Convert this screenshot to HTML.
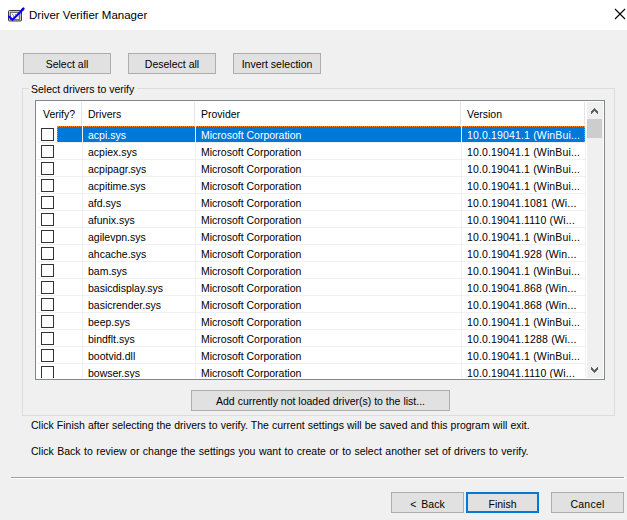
<!DOCTYPE html>
<html><head><meta charset="utf-8"><style>
*{margin:0;padding:0;box-sizing:border-box}
html,body{width:627px;height:520px;overflow:hidden;background:#f0f0f0}
body{position:relative;font-family:"Liberation Sans",sans-serif;font-size:10.5px;color:#000}
.a{position:absolute}
.t{position:absolute;white-space:pre;line-height:17px;height:17px}
.btn{position:absolute;background:#e1e1e1;border:1px solid #adadad;text-align:center;line-height:19px;padding-top:1px;white-space:pre}
.hl{position:absolute;background:#e5e5e5;width:1px}
.gv{position:absolute;background:#f0f0f0;width:1px}
.gh{position:absolute;background:#f0f0f0;height:1px}
.cb{position:absolute;width:13px;height:13px;border:1px solid #333;background:#fff}
</style></head><body>
<div class="a" style="left:0;top:0;width:627px;height:30px;background:#fff"></div>
<svg class="a" style="left:0;top:0" width="30" height="30" viewBox="0 0 30 30">
<rect x="8.5" y="10.5" width="13" height="10.5" rx="1" fill="#c4c4c4" stroke="#3c3c3c" stroke-width="1"/>
<rect x="10.5" y="12.5" width="9" height="7" fill="#f4f4f4" stroke="#707070" stroke-width="1"/>
<rect x="12" y="14" width="1" height="1" fill="#6a8cff"/><rect x="15" y="14" width="1" height="1" fill="#6a8cff"/>
<rect x="13" y="15" width="1" height="2" fill="#ff7070"/><rect x="18.5" y="16.5" width="1" height="1" fill="#e04050"/>
<path d="M9 16.6 L12.5 19.8 L23.2 9.2" fill="none" stroke="#0000ff" stroke-width="2.1" stroke-linecap="round" stroke-linejoin="round"/>
<path d="M22 9.8 L23.4 8.6" fill="none" stroke="#0000ff" stroke-width="2.4" stroke-linecap="round"/>
</svg>
<div class="t" style="left:29px;top:7px;font-size:11.5px;line-height:17px">Driver Verifier Manager</div>
<svg class="a" style="left:614px;top:8px" width="12" height="12" viewBox="0 0 12 12"><path d="M1 1 L11 11 M11 1 L1 11" stroke="#000" stroke-width="1.1"/></svg>
<div class="btn" style="left:23px;top:53px;width:88px;height:21px">Select all</div>
<div class="btn" style="left:128px;top:53px;width:88px;height:21px">Deselect all</div>
<div class="btn" style="left:233px;top:53px;width:88px;height:21px">Invert selection</div>
<div class="a" style="left:22px;top:88px;width:593px;height:328px;border:1px solid #dcdcdc"></div>
<div class="t" style="left:29px;top:81px;padding:0 3px 0 2px;background:#f0f0f0;height:14px">Select drivers to verify</div>
<div class="a" style="left:35px;top:100px;width:570px;height:280px;border:1px solid #828790;background:#fff"></div>
<div class="hl" style="left:81px;top:102px;height:23px"></div>
<div class="hl" style="left:194px;top:102px;height:23px"></div>
<div class="hl" style="left:460px;top:102px;height:23px"></div>
<div class="hl" style="left:584px;top:102px;height:23px"></div>
<div class="t" style="left:43px;top:106px">Verify?</div>
<div class="t" style="left:88px;top:106px">Drivers</div>
<div class="t" style="left:201px;top:106px">Provider</div>
<div class="t" style="left:467px;top:106px">Version</div>
<div class="a" style="left:37px;top:126px;width:549px;height:252px;overflow:hidden">
<div class="a" style="left:20px;top:0px;width:528px;height:16px;background:#0078d7"></div>
<div class="a" style="left:20px;top:0px;width:528px;height:16px;border:1px dotted #ff8728;border-bottom:none"></div>
<div class="gh" style="left:0;top:16px;width:549px"></div>
<div class="cb" style="left:4px;top:2px"></div>
<div class="t" style="left:51px;top:1px;color:#fff">acpi.sys</div>
<div class="t" style="left:164px;top:1px;color:#fff">Microsoft Corporation</div>
<div class="t" style="left:430px;top:1px;color:#fff;letter-spacing:0.15px">10.0.19041.1 (WinBui...</div>
<div class="gh" style="left:0;top:33px;width:549px"></div>
<div class="cb" style="left:4px;top:19px"></div>
<div class="t" style="left:51px;top:18px;color:#000">acpiex.sys</div>
<div class="t" style="left:164px;top:18px;color:#000">Microsoft Corporation</div>
<div class="t" style="left:430px;top:18px;color:#000;letter-spacing:0.15px">10.0.19041.1 (WinBui...</div>
<div class="gh" style="left:0;top:50px;width:549px"></div>
<div class="cb" style="left:4px;top:36px"></div>
<div class="t" style="left:51px;top:35px;color:#000">acpipagr.sys</div>
<div class="t" style="left:164px;top:35px;color:#000">Microsoft Corporation</div>
<div class="t" style="left:430px;top:35px;color:#000;letter-spacing:0.15px">10.0.19041.1 (WinBui...</div>
<div class="gh" style="left:0;top:67px;width:549px"></div>
<div class="cb" style="left:4px;top:53px"></div>
<div class="t" style="left:51px;top:52px;color:#000">acpitime.sys</div>
<div class="t" style="left:164px;top:52px;color:#000">Microsoft Corporation</div>
<div class="t" style="left:430px;top:52px;color:#000;letter-spacing:0.15px">10.0.19041.1 (WinBui...</div>
<div class="gh" style="left:0;top:84px;width:549px"></div>
<div class="cb" style="left:4px;top:70px"></div>
<div class="t" style="left:51px;top:69px;color:#000">afd.sys</div>
<div class="t" style="left:164px;top:69px;color:#000">Microsoft Corporation</div>
<div class="t" style="left:430px;top:69px;color:#000;letter-spacing:0.15px">10.0.19041.1081 (Wi...</div>
<div class="gh" style="left:0;top:101px;width:549px"></div>
<div class="cb" style="left:4px;top:87px"></div>
<div class="t" style="left:51px;top:86px;color:#000">afunix.sys</div>
<div class="t" style="left:164px;top:86px;color:#000">Microsoft Corporation</div>
<div class="t" style="left:430px;top:86px;color:#000;letter-spacing:0.15px">10.0.19041.1110 (Wi...</div>
<div class="gh" style="left:0;top:118px;width:549px"></div>
<div class="cb" style="left:4px;top:104px"></div>
<div class="t" style="left:51px;top:103px;color:#000">agilevpn.sys</div>
<div class="t" style="left:164px;top:103px;color:#000">Microsoft Corporation</div>
<div class="t" style="left:430px;top:103px;color:#000;letter-spacing:0.15px">10.0.19041.1 (WinBui...</div>
<div class="gh" style="left:0;top:135px;width:549px"></div>
<div class="cb" style="left:4px;top:121px"></div>
<div class="t" style="left:51px;top:120px;color:#000">ahcache.sys</div>
<div class="t" style="left:164px;top:120px;color:#000">Microsoft Corporation</div>
<div class="t" style="left:430px;top:120px;color:#000;letter-spacing:0.15px">10.0.19041.928 (Win...</div>
<div class="gh" style="left:0;top:152px;width:549px"></div>
<div class="cb" style="left:4px;top:138px"></div>
<div class="t" style="left:51px;top:137px;color:#000">bam.sys</div>
<div class="t" style="left:164px;top:137px;color:#000">Microsoft Corporation</div>
<div class="t" style="left:430px;top:137px;color:#000;letter-spacing:0.15px">10.0.19041.1 (WinBui...</div>
<div class="gh" style="left:0;top:169px;width:549px"></div>
<div class="cb" style="left:4px;top:155px"></div>
<div class="t" style="left:51px;top:154px;color:#000">basicdisplay.sys</div>
<div class="t" style="left:164px;top:154px;color:#000">Microsoft Corporation</div>
<div class="t" style="left:430px;top:154px;color:#000;letter-spacing:0.15px">10.0.19041.868 (Win...</div>
<div class="gh" style="left:0;top:186px;width:549px"></div>
<div class="cb" style="left:4px;top:172px"></div>
<div class="t" style="left:51px;top:171px;color:#000">basicrender.sys</div>
<div class="t" style="left:164px;top:171px;color:#000">Microsoft Corporation</div>
<div class="t" style="left:430px;top:171px;color:#000;letter-spacing:0.15px">10.0.19041.868 (Win...</div>
<div class="gh" style="left:0;top:203px;width:549px"></div>
<div class="cb" style="left:4px;top:189px"></div>
<div class="t" style="left:51px;top:188px;color:#000">beep.sys</div>
<div class="t" style="left:164px;top:188px;color:#000">Microsoft Corporation</div>
<div class="t" style="left:430px;top:188px;color:#000;letter-spacing:0.15px">10.0.19041.1 (WinBui...</div>
<div class="gh" style="left:0;top:220px;width:549px"></div>
<div class="cb" style="left:4px;top:206px"></div>
<div class="t" style="left:51px;top:205px;color:#000">bindflt.sys</div>
<div class="t" style="left:164px;top:205px;color:#000">Microsoft Corporation</div>
<div class="t" style="left:430px;top:205px;color:#000;letter-spacing:0.15px">10.0.19041.1288 (Wi...</div>
<div class="gh" style="left:0;top:237px;width:549px"></div>
<div class="cb" style="left:4px;top:223px"></div>
<div class="t" style="left:51px;top:222px;color:#000">bootvid.dll</div>
<div class="t" style="left:164px;top:222px;color:#000">Microsoft Corporation</div>
<div class="t" style="left:430px;top:222px;color:#000;letter-spacing:0.15px">10.0.19041.1 (WinBui...</div>
<div class="gh" style="left:0;top:254px;width:549px"></div>
<div class="cb" style="left:4px;top:240px"></div>
<div class="t" style="left:51px;top:239px;color:#000">bowser.sys</div>
<div class="t" style="left:164px;top:239px;color:#000">Microsoft Corporation</div>
<div class="t" style="left:430px;top:239px;color:#000;letter-spacing:0.15px">10.0.19041.1110 (Wi...</div>
<div class="gv" style="left:45px;top:0;height:252px"></div>
<div class="gv" style="left:158px;top:0;height:252px"></div>
<div class="gv" style="left:424px;top:0;height:252px"></div>
<div class="gv" style="left:548px;top:0;height:252px"></div>
</div>
<div class="a" style="left:587px;top:102px;width:16px;height:276px;background:#f0f0f0"></div>
<div class="a" style="left:587px;top:119px;width:15px;height:19px;background:#cdcdcd"></div>
<svg class="a" style="left:0;top:0" width="627" height="520" viewBox="0 0 627 520" shape-rendering="crispEdges"><path d="M594 108h1v1h-1zM593 109h1v1h-1zM594 109h1v1h-1zM595 109h1v1h-1zM592 110h1v1h-1zM593 110h1v1h-1zM594 110h1v1h-1zM595 110h1v1h-1zM596 110h1v1h-1zM591 111h1v1h-1zM592 111h1v1h-1zM593 111h1v1h-1zM595 111h1v1h-1zM596 111h1v1h-1zM597 111h1v1h-1zM591 112h1v1h-1zM592 112h1v1h-1zM596 112h1v1h-1zM597 112h1v1h-1zM591 113h1v1h-1zM597 113h1v1h-1z" fill="#606060"/><path d="M594 372h1v1h-1zM593 371h1v1h-1zM594 371h1v1h-1zM595 371h1v1h-1zM592 370h1v1h-1zM593 370h1v1h-1zM594 370h1v1h-1zM595 370h1v1h-1zM596 370h1v1h-1zM591 369h1v1h-1zM592 369h1v1h-1zM593 369h1v1h-1zM595 369h1v1h-1zM596 369h1v1h-1zM597 369h1v1h-1zM591 368h1v1h-1zM592 368h1v1h-1zM596 368h1v1h-1zM597 368h1v1h-1zM591 367h1v1h-1zM597 367h1v1h-1z" fill="#606060"/></svg>
<div class="btn" style="left:191px;top:390px;width:259px;height:21px">Add currently not loaded driver(s) to the list...</div>
<div class="t" style="left:31px;top:417px;word-spacing:0.17px">Click Finish after selecting the drivers to verify. The current settings will be saved and this program will exit.</div>
<div class="t" style="left:31px;top:443px;word-spacing:0.55px">Click Back to review or change the settings you want to create or to select another set of drivers to verify.</div>
<div class="a" style="left:11px;top:477px;width:613px;height:1px;background:#a0a0a0"></div>
<div class="a" style="left:11px;top:478px;width:614px;height:1px;background:#fff"></div>
<div class="a" style="left:624px;top:477px;width:1px;height:1px;background:#fff"></div>
<div class="btn" style="left:391px;top:492px;width:73px;height:21px;padding-top:2px;line-height:18px;word-spacing:2px">&lt; Back</div>
<div class="btn" style="left:466px;top:492px;width:73px;height:21px;border:2px solid #0078d7;padding-top:2px;line-height:16px">Finish</div>
<div class="btn" style="left:551px;top:492px;width:73px;height:21px;padding-top:2px;line-height:18px;letter-spacing:0.25px">Cancel</div>
</body></html>
